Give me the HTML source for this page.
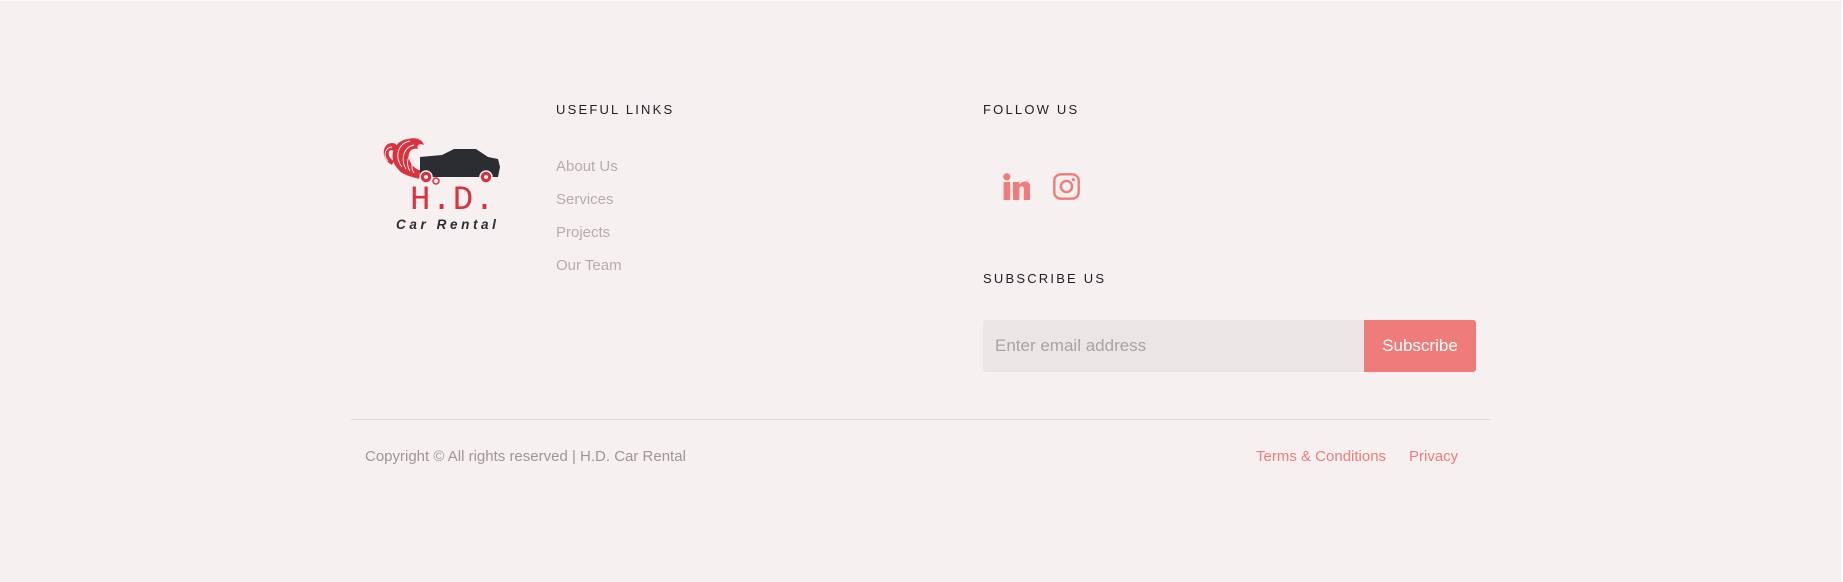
<!DOCTYPE html>
<html><head><meta charset="utf-8"><style>
*{margin:0;padding:0;box-sizing:border-box}
html,body{width:1843px;height:582px;background:#f6f0f0;overflow:hidden;font-family:"Liberation Sans",sans-serif}
body{position:relative;border-top:1px solid #faf7f7}
.a{position:absolute;white-space:nowrap}
.h{font-size:13px;letter-spacing:2.2px;color:#1f1f24;font-weight:500}
.l{font-size:15px;color:#b5acae}
</style></head><body>
<!-- logo -->
<svg class="a" style="left:380px;top:134px" width="122" height="52" viewBox="0 0 122 52">
 <path d="M12 30 C0 24 2 8 12 8 C18 8 18 14 14 16 C8 12 6 22 14 26 Z" fill="#d9333f"/>
 <path d="M18 34 C8 24 12 6 28 4 C36 2 42 4 44 10 C40 8 36 10 38 14 C32 12 26 18 30 26 C32 32 38 36 44 36 L40 44 C32 42 22 40 18 34 Z" fill="#d9333f"/>
 <g fill="none" stroke="#f6f0f0" stroke-width="0.9">
  <path d="M22 32c-8-10-4-24 8-26"/><path d="M26 34c-6-10-2-22 8-24"/><path d="M30 36c-5-8-2-18 6-20"/>
  <path d="M34 38c-4-6-2-14 4-16"/><path d="M8 26c-6-6-2-14 4-14"/>
 </g>
 <path d="M40 22 L62 20 L74 14 L96 14 L108 22 L118 24 L120 32 L118 42 L40 42 Z" fill="#2b2d33"/>
 <circle cx="106" cy="42" r="6" fill="#d9333f" stroke="#f6f0f0" stroke-width="1.5"/>
 <circle cx="106" cy="42" r="2" fill="#f6f0f0"/>
 <circle cx="46" cy="42" r="6" fill="#d9333f" stroke="#f6f0f0" stroke-width="1.5"/>
 <circle cx="46" cy="42" r="2" fill="#f6f0f0"/>
 <circle cx="56" cy="46" r="3" fill="none" stroke="#d9333f" stroke-width="1.5"/>
</svg>
<div class="a" style="left:410px;top:185px;font-size:34px;color:#d9333f;letter-spacing:1px;font-family:'Liberation Mono',monospace;line-height:30px">H.D.</div>
<div class="a" style="left:396px;top:216px;font-size:13.5px;color:#2b2d33;font-weight:bold;font-style:italic;letter-spacing:3.6px;line-height:15px">Car Rental</div>

<div class="a h" style="left:556px;top:101px">USEFUL LINKS</div>
<div class="a l" style="left:556px;top:157px">About Us</div>
<div class="a l" style="left:556px;top:190px">Services</div>
<div class="a l" style="left:556px;top:223px">Projects</div>
<div class="a l" style="left:556px;top:256px">Our Team</div>

<div class="a h" style="left:983px;top:101px">FOLLOW US</div>
<svg class="a" style="left:1003px;top:172px" width="27" height="27" viewBox="0 0 27 27">
 <circle cx="3.8" cy="3.8" r="3.6" fill="#f07b7b"/>
 <rect x="0.6" y="9" width="6.6" height="18" fill="#f07b7b"/>
 <path d="M10 9h6.4v2.6c1.5-2.3 3.6-3.1 6-3.1 4 0 5 2.9 5 6.6V27h-6.6V16.4c0-2-.6-3-2.2-3S16.4 14.4 16.4 16.4V27H10z" fill="#f07b7b"/>
</svg>
<svg class="a" style="left:1053px;top:172px" width="27" height="27" viewBox="0 0 27 27">
 <rect x="1.3" y="1.3" width="24.4" height="24.4" rx="6.5" fill="none" stroke="#f07b7b" stroke-width="2.4"/>
 <circle cx="13.5" cy="13.5" r="5.6" fill="none" stroke="#f07b7b" stroke-width="2.4"/>
 <circle cx="20.3" cy="6.7" r="1.6" fill="#f07b7b"/>
</svg>

<div class="a h" style="left:983px;top:270px">SUBSCRIBE US</div>
<div class="a" style="left:983px;top:319px;width:381px;height:52px;background:#ebe5e5;border-radius:3px 0 0 3px"></div>
<div class="a" style="left:995px;top:335px;font-size:17px;color:#aaa3a4">Enter email address</div>
<div class="a" style="left:1364px;top:319px;width:112px;height:52px;background:#f07b7b;border-radius:0 3px 3px 0;color:#fff;font-size:17px;text-align:center;line-height:51px">Subscribe</div>

<div class="a" style="left:351px;top:418px;width:1140px;height:1px;background:#e3dddd"></div>
<div class="a" style="left:365px;top:447px;font-size:15px;color:#9e9698">Copyright © All rights reserved | H.D. Car Rental</div>
<div class="a" style="left:1256px;top:447px;font-size:15px;color:#f07b7b">Terms &amp; Conditions</div>
<div class="a" style="left:1409px;top:447px;font-size:15px;color:#f07b7b">Privacy</div>
<div class="a" style="left:1841px;top:0;width:2px;height:582px;background:#fbf9f9"></div>
</body></html>
